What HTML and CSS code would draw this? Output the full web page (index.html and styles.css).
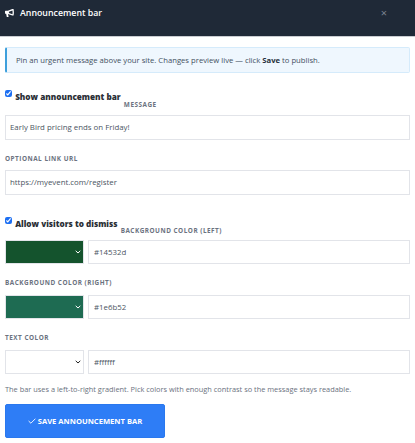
FILE: index.html
```html
<!DOCTYPE html>
<html>
<head>
  <title>Announcement bar</title>
  <link rel="stylesheet" href="styles.css">
</head>
<body>
  <div class="modal-header">
    <div class="modal-title">
      <svg class="icon-bullhorn" viewBox="0 0 16 14" width="9" height="8">
        <path d="M15.2 0 L13 0 L5 3 L1 3 Q0 3 0 4 L0 7.5 Q0 8.5 1 8.5 L2 8.5 L3.2 14 L6.4 14 L5.4 8.7 L13 11.6 L15.2 11.6 Q16.4 6 15.2 0 Z M13.2 2.4 Q13.8 6 13.2 9.2 L7 6.9 L7 4.8 Z" fill="#ffffff" fill-rule="evenodd"/>
      </svg>
      <span>Announcement bar</span>
    </div>
    <span class="modal-close">×</span>
  </div>
  <div class="modal-body">
    <div class="alert">Pin an urgent message above your site. Changes preview live — click <b>Save</b> to publish.</div>

    <label class="check"><input type="checkbox" checked> Show announcement bar</label>
    <label class="field-label inline">Message</label>
    <input class="text-input" type="text" value="Early Bird pricing ends on Friday!">

    <label class="field-label">Optional link URL</label>
    <input class="text-input" type="text" value="https://myevent.com/register">

    <label class="check second"><input type="checkbox" checked> Allow visitors to dismiss</label>
    <label class="field-label inline tight">Background color (left)</label>
    <div class="color-row">
      <select class="swatch dark-green"><option></option></select>
      <input class="text-input" type="text" value="#14532d">
    </div>

    <label class="field-label">Background color (right)</label>
    <div class="color-row">
      <select class="swatch mid-green"><option></option></select>
      <input class="text-input" type="text" value="#1e6b52">
    </div>

    <label class="field-label">Text color</label>
    <div class="color-row">
      <select class="swatch white"><option></option></select>
      <input class="text-input" type="text" value="#ffffff">
    </div>

    <p class="help">The bar uses a left-to-right gradient. Pick colors with enough contrast so the message stays readable.</p>
    <button class="save-btn">
      <svg viewBox="0 0 8 6" width="8" height="6"><path d="M0.6 3 L2.9 5.2 L7.4 0.7" fill="none" stroke="#ffffff" stroke-width="0.9"/></svg>
      Save announcement bar
    </button>
  </div>
</body>
</html>
```

FILE: styles.css
```css
* {
  box-sizing: border-box;
}
body {
  margin: 0;
  font-family: "Open Sans", sans-serif;
  color: #3a4350;
  background: #fff;
  overflow: hidden;
}
.modal-header {
  height: 37px;
  padding: 6px 5px 0;
  display: flex;
  justify-content: space-between;
  align-items: flex-start;
  background: #1f2937;
  border-bottom: 1px solid #c9ccd1;
}
.modal-title {
  display: flex;
  align-items: center;
  gap: 6px;
  font-size: 8.8px;
  font-weight: 600;
  line-height: 14px;
  color: #fff;
}
.modal-close {
  margin-right: 23px;
  font-size: 11px;
  line-height: 13px;
  color: #7b838f;
}
.modal-body {
  padding: 10px 5px 0;
}
.alert {
  height: 25.5px;
  padding: 0 9px;
  font-size: 7.7px;
  line-height: 25px;
  white-space: nowrap;
  color: #43505f;
  background: #eff7fe;
  border: 1px solid #d5ebfb;
  border-left: 2px solid #3ea0dc;
  border-radius: 2px;
}
.alert b {
  color: #26303c;
}
.check {
  display: inline-block;
  margin-top: 17px;
  font-size: 8.2px;
  font-weight: 800;
  line-height: 14px;
  color: #2b2f36;
}
.check.second {
  margin-top: 22px;
}
.check input {
  width: 7px;
  height: 7px;
  margin: 0 1px 0 0;
  accent-color: #1d6ff2;
  vertical-align: 3px;
}
.field-label {
  display: block;
  font-size: 6.4px;
  font-weight: 700;
  letter-spacing: 0.5px;
  line-height: 10px;
  text-transform: uppercase;
  color: #6b7280;
  margin: 14px 0 6.5px;
}
.field-label.inline {
  display: inline-block;
  margin: 0 0 5.5px -1px;
  vertical-align: -7px;
}
.field-label.inline.tight {
  margin-bottom: 4.2px;
  vertical-align: -6px;
}
.text-input {
  display: block;
  width: 100%;
  height: 24.5px;
  padding: 0 4px;
  font-family: inherit;
  font-size: 7.85px;
  color: #4b5563;
  background: #fff;
  border: 1px solid #e2e4e9;
  border-radius: 0;
  outline: none;
}
.color-row {
  display: flex;
  gap: 4px;
}
.color-row .text-input {
  flex: 1;
  padding: 0 5px;
}
.swatch {
  width: 79px;
  height: 24.5px;
  flex: none;
  appearance: none;
  border: 1px solid #e2e4e9;
  border-radius: 0;
  background-repeat: no-repeat;
  background-position: right 2.5px center;
  background-size: 6px 4px;
}
.dark-green {
  background-color: #14532d;
  background-image: url("data:image/svg+xml,%3Csvg xmlns='http://www.w3.org/2000/svg' viewBox='0 0 6 4'%3E%3Cpath d='M0.7 0.8 L3 3 L5.3 0.8' fill='none' stroke='%23fff' stroke-width='1'/%3E%3C/svg%3E");
}
.mid-green {
  background-color: #1e6b52;
  background-image: url("data:image/svg+xml,%3Csvg xmlns='http://www.w3.org/2000/svg' viewBox='0 0 6 4'%3E%3Cpath d='M0.7 0.8 L3 3 L5.3 0.8' fill='none' stroke='%23fff' stroke-width='1'/%3E%3C/svg%3E");
}
.white {
  background-color: #fff;
  background-image: url("data:image/svg+xml,%3Csvg xmlns='http://www.w3.org/2000/svg' viewBox='0 0 6 4'%3E%3Cpath d='M0.7 0.8 L3 3 L5.3 0.8' fill='none' stroke='%23222' stroke-width='1'/%3E%3C/svg%3E");
}
.help {
  margin: 10px 0 0;
  font-size: 7.4px;
  line-height: 11px;
  white-space: nowrap;
  color: #6b7280;
}
.save-btn {
  display: block;
  width: 160px;
  height: 33.5px;
  margin-top: 9px;
  padding: 0;
  font-family: inherit;
  font-size: 7.6px;
  font-weight: 700;
  text-transform: uppercase;
  color: #fff;
  background: #2e7df6;
  border: 1px solid #2a78ee;
  border-radius: 2px;
}
```
